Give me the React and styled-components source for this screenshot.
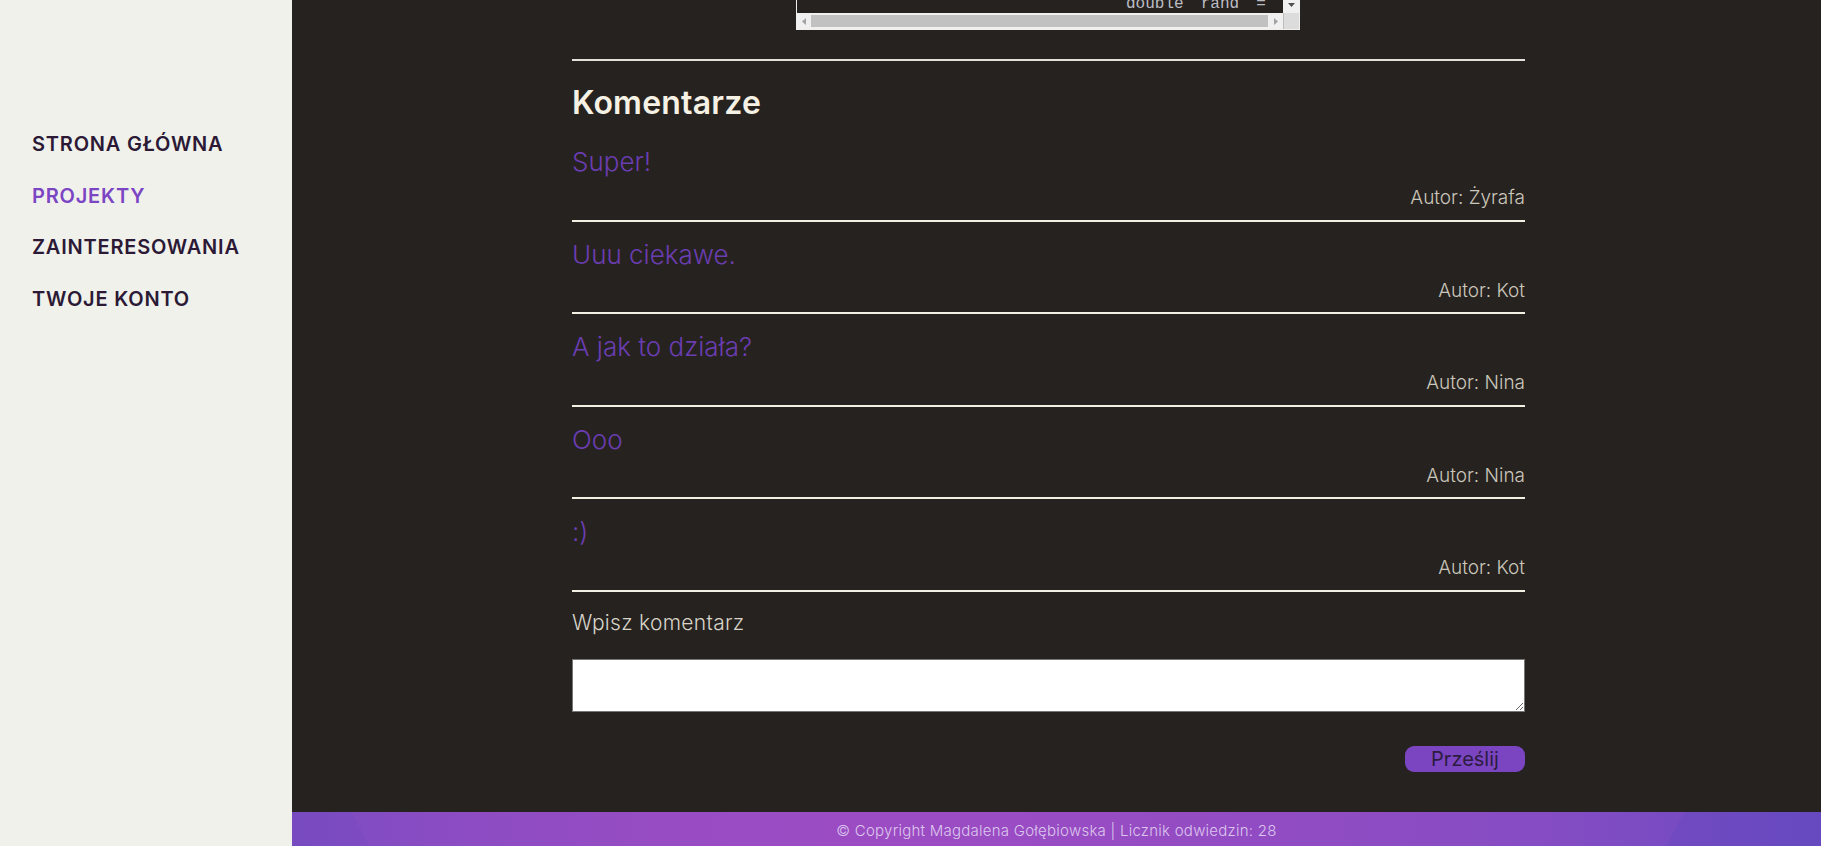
import React from 'react';
import styled, { createGlobalStyle } from 'styled-components';

const font = `Inter, "Open Sans", "DejaVu Sans", sans-serif`;

const GlobalStyle = createGlobalStyle`
    html, body, #root {
        margin: 0;
        padding: 0;
        height: 100%;
    }
    body {
        background: #262220;
        font-family: ${font};
    }
`

const Page = styled.div`
    display: flex;
    min-height: 100vh;
`
const Sidebar = styled.nav`
    width: 292px;
    flex-shrink: 0;
    background: #f1f1ec;
    display: flex;
    flex-direction: column;
    gap: 27.6px;
    padding: 132px 0 0 32px;
    box-sizing: border-box;
`
const NavLink = styled.a`
    font-family: ${font};
    font-size: 20px;
    line-height: 24px;
    font-weight: 600;
    letter-spacing: 0.8px;
    text-decoration: none;
    color: ${p => (p.$active ? '#7b45c3' : '#2b1935')};
`
const Main = styled.main`
    flex: 1;
    display: flex;
    flex-direction: column;
`
const Content = styled.div`
    flex: 1;
    width: 953px;
    margin-left: 280px;
    padding-bottom: 40px;
`

/* leftover bottom of the code listing above */
const CodeBox = styled.div`
    width: 504px;
    margin-left: 224px;
    border: 1px solid #efefef;
    border-top: none;
    box-sizing: border-box;
`
const CodeRow = styled.div`
    display: flex;
    height: 13px;
`
const CodeView = styled.div`
    flex: 1;
    overflow: hidden;
    display: flex;
    align-items: flex-end;
    background: #262220;
`
const CodeLine = styled.pre`
    margin: 0;
    padding-left: 329px;
    font-family: "Liberation Mono", "DejaVu Sans Mono", monospace;
    font-size: 16px;
    line-height: 18px;
    word-spacing: 7.5px;
    color: #bdbdc4;
`
const VScroll = styled.div`
    width: 16px;
    background: #f0f0f0;
    display: flex;
    justify-content: center;
    padding-top: 3px;
    box-sizing: border-box;
`
const ScrollBar = styled.div`
    display: flex;
    align-items: center;
    height: 16px;
    background: #f0f0f0;
`
const Arrow = styled.span`
    width: ${p => p.$w}px;
    display: flex;
    justify-content: center;
`
const Thumb = styled.div`
    flex: 1;
    height: 12px;
    background: #c1c1c1;
`
const Corner = styled.div`
    width: 16px;
    height: 16px;
    background: #dcdcdc;
    border-left: 1px solid #bdbdbd;
    box-sizing: border-box;
`

const Divider = styled.hr`
    margin: 29px 0 0;
    border: none;
    height: 2px;
    background: #e4e1da;
`
const Heading = styled.h2`
    margin: 23px 0 7px;
    font-family: ${font};
    font-size: 32px;
    line-height: 38px;
    font-weight: 600;
    letter-spacing: 0.2px;
    color: #f5f1e4;
`
const Comment = styled.div`
    padding: 17px 0 9.5px;
    border-bottom: 2px solid #f3efe2;
`
const CommentText = styled.p`
    margin: 0;
    font-family: ${font};
    font-size: 26px;
    line-height: 32px;
    font-weight: 300;
    color: #6a3db1;
`
const Author = styled.p`
    margin: 8px 0 0;
    font-family: ${font};
    font-size: 19px;
    line-height: 24px;
    font-weight: 300;
    text-align: right;
    color: #cbc7bb;
`
const Label = styled.label`
    display: block;
    margin-top: 19px;
    font-family: ${font};
    font-size: 21px;
    line-height: 24px;
    font-weight: 300;
    letter-spacing: 0.3px;
    color: #d8d4c8;
`
const TextArea = styled.textarea`
    display: block;
    margin-top: 24px;
    width: 100%;
    height: 53px;
    box-sizing: border-box;
    border: 1px solid #767676;
    background: #fff;
`
const ButtonRow = styled.div`
    display: flex;
    justify-content: flex-end;
    margin-top: 34.5px;
`
const SubmitButton = styled.button`
    width: 120px;
    height: 26px;
    border: none;
    border-radius: 9px;
    background: #7b45c2;
    color: #2c1c40;
    font-family: ${font};
    font-size: 20px;
    font-weight: 400;
    padding: 0;
    cursor: pointer;
`
const Footer = styled.footer`
    height: 34px;
    box-sizing: border-box;
    padding-top: 3px;
    display: flex;
    align-items: center;
    justify-content: center;
    background:
        linear-gradient(62deg, rgba(110, 70, 190, 0.2) 0 5%, transparent 5%),
        linear-gradient(118deg, transparent 90%, rgba(95, 70, 190, 0.3) 90%),
        linear-gradient(90deg, #7a4cc1 0%, #8b4cc3 10%, #984cc3 25%, #9c4cc3 40%, #964cc3 55%, #8e4cc3 70%, #854cc3 82%, #764bc2 92%, #6a4bc0 100%);
    font-family: ${font};
    font-size: 15px;
    font-weight: 300;
    letter-spacing: 0.25px;
    color: #dcc6ee;
`

const comments = [
    { text: 'Super!', author: 'Żyrafa' },
    { text: 'Uuu ciekawe.', author: 'Kot' },
    { text: 'A jak to działa?', author: 'Nina' },
    { text: 'Ooo', author: 'Nina' },
    { text: ':)', author: 'Kot' },
];

const navItems = ['STRONA GŁÓWNA', 'PROJEKTY', 'ZAINTERESOWANIA', 'TWOJE KONTO'];

const Tri = ({ dir }) => (
    <svg width="5" height="7" viewBox="0 0 5 7">
        {dir === 'left'
            ? <path d="M4 0 L0 3.5 L4 7 Z" fill="#a3a3a3" />
            : <path d="M1 0 L5 3.5 L1 7 Z" fill="#a3a3a3" />}
    </svg>
);

export default function App() {
    return (
        <>
            <GlobalStyle />
            <Page>
                <Sidebar>
                    {navItems.map(item =>
                        <NavLink key={item} href="#" $active={item === 'PROJEKTY'}>{item}</NavLink>
                    )}
                </Sidebar>
                <Main>
                    <Content>
                        <CodeBox>
                            <CodeRow>
                                <CodeView>
                                    <CodeLine>double rand =</CodeLine>
                                </CodeView>
                                <VScroll>
                                    <svg width="7" height="4" viewBox="0 0 7 4">
                                        <path d="M0 0 L7 0 L3.5 4 Z" fill="#505050" />
                                    </svg>
                                </VScroll>
                            </CodeRow>
                            <ScrollBar>
                                <Arrow $w={14}><Tri dir="left" /></Arrow>
                                <Thumb />
                                <Arrow $w={15}><Tri dir="right" /></Arrow>
                                <Corner />
                            </ScrollBar>
                        </CodeBox>
                        <Divider />
                        <Heading>Komentarze</Heading>
                        {comments.map((c, i) =>
                            <Comment key={i}>
                                <CommentText>{c.text}</CommentText>
                                <Author>Autor: {c.author}</Author>
                            </Comment>
                        )}
                        <Label htmlFor="comment">Wpisz komentarz</Label>
                        <TextArea id="comment" />
                        <ButtonRow>
                            <SubmitButton>Prześlij</SubmitButton>
                        </ButtonRow>
                    </Content>
                    <Footer>© Copyright Magdalena Gołębiowska | Licznik odwiedzin: 28</Footer>
                </Main>
            </Page>
        </>
    );
}
